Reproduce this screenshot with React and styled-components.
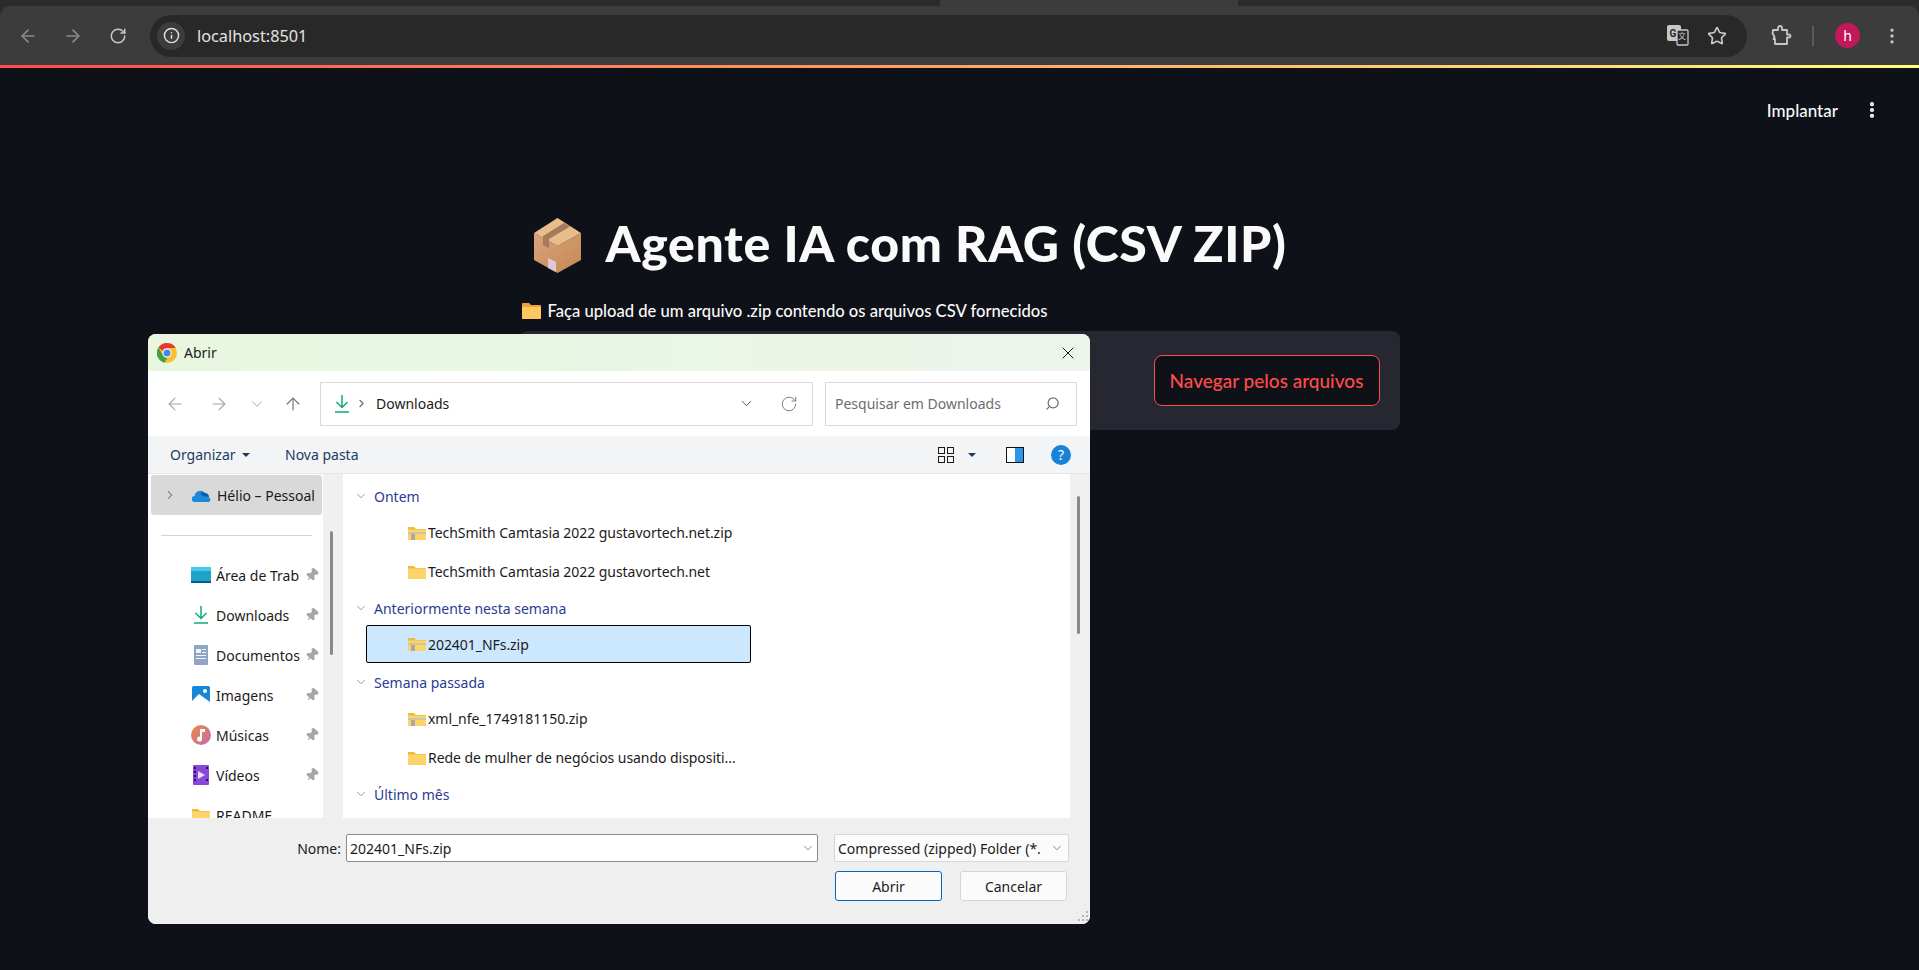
import React from 'react'
import styled, { createGlobalStyle } from 'styled-components'
import {
  ArrowLeft, ArrowRight, ArrowUp, RotateCw, Info, Star, EllipsisVertical,
  ChevronDown, ChevronRight, Search, X, Pin
} from 'lucide-react'

const GlobalStyle = createGlobalStyle`
  html, body {
    margin: 0;
    height: 970px;
    overflow: hidden;
    background: #0e1117;
    font-family: "Noto Sans", sans-serif;
  }
`

const BrowserFrame = styled.div`
  background: #2b2b2b;
`

const TabStrip = styled.div`
  height: 6px;
  padding-left: 940px;
`

const ActiveTab = styled.div`
  width: 298px;
  height: 6px;
  background: #3c3c3c;
`

const Toolbar = styled.div`
  height: 59px;
  display: flex;
  align-items: center;
  padding-left: 5px;
  background: #3c3c3c;
  border-radius: 10px 10px 0 0;
`

const NavButton = styled.div`
  width: 45px;
  display: flex;
  justify-content: center;
  color: ${p => (p.$dim ? '#8a8a8a' : '#c7c7c7')};
`

const Omnibox = styled.div`
  flex: 1;
  height: 42px;
  margin-left: 10px;
  padding: 0 20px 0 7px;
  display: flex;
  align-items: center;
  background: #282828;
  border-radius: 21px;
  color: #e3e3e3;
`

const InfoChip = styled.div`
  width: 28px;
  height: 28px;
  display: flex;
  align-items: center;
  justify-content: center;
  border-radius: 50%;
  background: #3c3c3c;
`

const Url = styled.span`
  flex: 1;
  margin-left: 12px;
  font-size: 16.3px;
`

const OmniIcons = styled.div`
  display: flex;
  align-items: center;
  gap: 18px;
  color: #c7c7c7;
`

const ToolbarRight = styled.div`
  width: 172px;
  display: flex;
  align-items: center;
  padding-left: 24px;
  box-sizing: border-box;
  color: #c7c7c7;
`

const Divider = styled.div`
  width: 2px;
  height: 20px;
  margin: 0 21px 0 20px;
  background: #5a5a5a;
`

const Avatar = styled.div`
  width: 25px;
  height: 25px;
  display: flex;
  align-items: center;
  justify-content: center;
  border-radius: 50%;
  background: #c2185b;
  color: #fff;
  font-size: 14px;
`

const KebabSlot = styled.div`
  margin-left: 22px;
  display: flex;
  color: #c7c7c7;
`

const Decoration = styled.div`
  height: 3px;
  background: linear-gradient(90deg, #ff4b4b, #fffd80);
`

const PageHeader = styled.header`
  height: 84px;
  padding-right: 37px;
  display: flex;
  align-items: center;
  justify-content: flex-end;
  gap: 24px;
  color: #fafafa;
  font-family: Lato, sans-serif;
  font-size: 17px;
  font-weight: 500;
`

const Column = styled.main`
  width: 880px;
  margin: 0 auto;
  font-family: Lato, sans-serif;
  color: #fafafa;
`

const Title = styled.h1`
  height: 80px;
  margin: 51px 0 0 14px;
  display: flex;
  align-items: center;
  gap: 25px;
  font-size: 50px;
  line-height: 80px;
  font-weight: 900;
  letter-spacing: 0.65px;
  svg { margin-top: 4px; }
`

const Caption = styled.p`
  height: 24px;
  margin: 16px 0 0;
  padding-left: 2px;
  display: flex;
  align-items: center;
  gap: 7px;
  font-size: 16.6px;
  font-weight: 500;
`

const Dropzone = styled.section`
  height: 99px;
  margin-top: 8px;
  padding-right: 20px;
  display: flex;
  align-items: center;
  justify-content: flex-end;
  background: #262730;
  border-radius: 8px;
`

const BrowseButton = styled.button`
  width: 226px;
  height: 51px;
  padding: 0;
  background: #0e1117;
  border: 1px solid #ff4b4b;
  border-radius: 8px;
  color: #ff4b4b;
  font-family: Lato, sans-serif;
  font-size: 19px;
  font-weight: 500;
`

const Dialog = styled.div`
  position: absolute;
  left: 148px;
  top: 334px;
  width: 942px;
  height: 590px;
  display: flex;
  flex-direction: column;
  overflow: hidden;
  background: #fff;
  border-radius: 8px;
  color: #1b1b1b;
  font-size: 14px;
`

const TitleBar = styled.div`
  height: 37px;
  flex: none;
  padding: 0 12px 0 9px;
  display: flex;
  align-items: center;
  gap: 7px;
  background: linear-gradient(90deg, #e9f7df, #ebf5eb);
`

const TitleText = styled.span`
  flex: 1;
`

const PathRow = styled.div`
  height: 65px;
  flex: none;
  padding-left: 5px;
  display: flex;
  align-items: center;
  background: #fff;
`

const PathButton = styled.div`
  width: ${p => p.$w}px;
  display: flex;
  justify-content: center;
  color: ${p => (p.$dark ? '#6a6a6a' : '#a3a3a3')};
`

const PathBox = styled.div`
  width: 493px;
  height: 44px;
  margin-left: 7px;
  padding: 0 14px 0 13px;
  box-sizing: border-box;
  display: flex;
  align-items: center;
  border: 1px solid #d9d9d9;
`

const Crumb = styled.span`
  flex: 1;
  margin-left: 8px;
`

const SearchBox = styled.div`
  width: 252px;
  height: 44px;
  margin-left: 12px;
  padding: 0 16px 0 9px;
  box-sizing: border-box;
  display: flex;
  align-items: center;
  justify-content: space-between;
  border: 1px solid #d9d9d9;
  color: #6d6d6d;
`

const CommandBar = styled.div`
  height: 38px;
  flex: none;
  padding: 0 19px 0 22px;
  display: flex;
  align-items: center;
  background: #f3f4f6;
  border-bottom: 1px solid #e6e6e6;
  box-sizing: border-box;
  color: #1c3b63;
`

const Command = styled.span`
  display: flex;
  align-items: center;
  gap: 6px;
  width: ${p => p.$w}px;
`

const Caret = styled.span`
  width: 0;
  height: 0;
  margin: ${p => p.$margin || '0'};
  border-left: 4px solid transparent;
  border-right: 4px solid transparent;
  border-top: 4px solid #1c3b63;
`

const CommandIcons = styled.div`
  margin-left: auto;
  display: flex;
  align-items: center;
  svg:last-child { margin-left: 27px; }
`

const Panes = styled.div`
  height: 344px;
  flex: none;
  display: flex;
  background: #fff;
`

const NavPane = styled.nav`
  width: 175px;
  flex: none;
  padding: 1px 1px 0 3px;
  box-sizing: border-box;
  overflow: hidden;
`

const NavItem = styled.div`
  height: 40px;
  flex: none;
  display: flex;
  align-items: center;
  white-space: nowrap;
  padding-left: ${p => (p.$root ? 12 : 40)}px;
  background: ${p => (p.$selected ? '#d9d9d9' : 'transparent')};
  border-radius: ${p => (p.$selected ? '3px' : '0')};
  color: #1b1b1b;
`

const NavIcon = styled.span`
  width: 20px;
  height: 20px;
  flex: none;
  margin-right: 5px;
  display: flex;
  align-items: center;
  justify-content: center;
`

const NavLabel = styled.span`
  width: 89px;
  flex: none;
  overflow: hidden;
`

const PinSlot = styled.span`
  display: flex;
  color: #a5a5a5;
  svg { transform: rotate(40deg); }
`

const NavRule = styled.div`
  height: 1px;
  margin: 20px 10px 19px 10px;
  background: #d4d4d4;
`

const ScrollStrip = styled.div`
  width: ${p => p.$w}px;
  flex: none;
  padding-top: ${p => p.$top}px;
  padding-left: 7px;
  box-sizing: border-box;
  background: #f0f0f0;
`

const ScrollThumb = styled.div`
  width: 3px;
  height: ${p => p.$h}px;
  background: #8a8a8a;
  border-radius: 2px;
`

const FileList = styled.div`
  flex: 1;
  padding: 5px 16px 0 11px;
  overflow: hidden;
`

const GroupHeader = styled.div`
  height: 34px;
  display: flex;
  align-items: center;
  gap: 6px;
  color: #2b3b95;
  svg { color: #7d7d7d; }
`

const FileRow = styled.div`
  width: 385px;
  height: ${p => (p.$selected ? 38 : 39)}px;
  margin: ${p => (p.$selected ? '0 0 2px 12px' : '0 0 0 12px')};
  padding-left: 41px;
  box-sizing: border-box;
  display: flex;
  align-items: center;
  gap: 2px;
  background: ${p => (p.$selected ? '#cce8ff' : 'transparent')};
  border: 1px solid ${p => (p.$selected ? '#000' : 'transparent')};
  border-radius: 2px;
  white-space: nowrap;
  letter-spacing: -0.05px;
`

const Footer = styled.div`
  position: relative;
  flex: 1;
  padding: 16px 21px 0 0;
  background: #efefef;
`

const FormRow = styled.div`
  display: flex;
  justify-content: flex-end;
  align-items: center;
`

const NameLabel = styled.label`
  margin-right: 5px;
`

const NameField = styled.div`
  width: 472px;
  height: 28px;
  padding: 0 2px 0 3px;
  box-sizing: border-box;
  display: flex;
  align-items: center;
  justify-content: space-between;
  background: #fff;
  border: 1px solid #8a8a8a;
  border-radius: 2px;
`

const TypeField = styled.div`
  width: 235px;
  height: 28px;
  margin-left: 16px;
  padding: 0 4px 0 3px;
  box-sizing: border-box;
  display: flex;
  align-items: center;
  justify-content: space-between;
  background: #fbfbfb;
  border: 1px solid #d5d5d5;
  border-radius: 2px;
`

const TypeText = styled.span`
  width: 202px;
  overflow: hidden;
  white-space: nowrap;
`

const Actions = styled(FormRow)`
  margin-top: 9px;
  padding-right: 2px;
  gap: 18px;
`

const DialogButton = styled.button`
  width: 107px;
  height: 30px;
  padding: 0;
  background: #fbfbfb;
  border: 1px solid ${p => (p.$primary ? '#0067c0' : '#d5d5d5')};
  border-radius: 3px;
  color: #1b1b1b;
  font-family: "Noto Sans", sans-serif;
  font-size: 14px;
`

const Grip = styled.svg`
  position: absolute;
  right: 1px;
  bottom: 1px;
`

const Box3D = () => (
  <svg width="47" height="55" viewBox="0 0 47 55">
    <defs>
      <linearGradient id="boxFront" x1="0" y1="0" x2="1" y2="1">
        <stop offset="0" stopColor="#d9a57c" />
        <stop offset="1" stopColor="#c48752" />
      </linearGradient>
    </defs>
    <path d="M23.500 28 47 15v27L23.500 55 0 42V15z" fill="url(#boxFront)" />
    <path d="M23.500 0 47 15 23.500 28 0 15z" fill="#e8bd89" />
    <path d="M30 5l6 3.500L15 21v9l-6-3v-9z" fill="#a87a5c" />
    <path d="M14 40l8 4v10l-8-4z" fill="#ddc9d4" />
  </svg>
)

const EmojiFolder = () => (
  <svg width="19" height="16" viewBox="0 0 19 16">
    <path d="M1 0h6l2 2h9a1 1 0 0 1 1 1v12a1 1 0 0 1-1 1H1a1 1 0 0 1-1-1V1a1 1 0 0 1 1-1z" fill="#e8a33a" />
    <rect y="4" width="19" height="12" rx="1" fill="#fcc85f" />
  </svg>
)

const Folder = ({ zip }) => (
  <svg width="18" height="14" viewBox="0 0 18 14">
    <path d="M0 1h6l2 2h10v11H0z" fill="#f0b93c" />
    <rect y="3.500" width="18" height="10.500" fill="#fdd468" />
    {zip && <rect y="6" width="18" height="2" fill="#c9c6ae" />}
    {zip && <rect x="3" y="8" width="4" height="6" fill="#a9a9a0" />}
  </svg>
)

const ChromeLogo = () => (
  <svg width="20" height="20" viewBox="0 0 20 20">
    <circle cx="10" cy="10" r="10" fill="#fbc02d" />
    <path d="M10 0a10 10 0 0 1 8.700 5H10a5 5 0 0 0-4.500 2.800L1.500 4.500A10 10 0 0 1 10 0z" fill="#e53935" />
    <path d="M1.500 4.500 5.800 12a5 5 0 0 0 4.600 3L7.400 19.700A10 10 0 0 1 1.500 4.500z" fill="#43a047" />
    <circle cx="10" cy="10" r="4.500" fill="#fff" />
    <circle cx="10" cy="10" r="3.500" fill="#4285f4" />
  </svg>
)

const DownloadIcon = () => (
  <svg width="16" height="18" viewBox="0 0 16 18" fill="none" stroke="#12a97f" strokeWidth="1.500">
    <path d="M8 0v12M2.500 7 8 12.500 13.500 7M1 17h14" />
  </svg>
)

const TranslateIcon = () => (
  <svg width="22" height="21" viewBox="0 0 22 21">
    <rect x="0" y="0" width="14" height="16" rx="2" fill="#c7c7c7" />
    <text x="2.500" y="11.500" fontSize="10" fontWeight="700" fill="#282828" fontFamily="Roboto">G</text>
    <rect x="10" y="5" width="11" height="15" rx="1" fill="#282828" stroke="#c7c7c7" strokeWidth="1.300" />
    <text x="11" y="14" fontSize="8" fill="#c7c7c7" fontFamily="Noto Sans CJK SC">文</text>
  </svg>
)

const PuzzleIcon = () => (
  <svg width="21" height="21" viewBox="0 0 21 21" fill="none" stroke="#c7c7c7" strokeWidth="1.800">
    <path d="M2 5h5V3a2 2 0 0 1 4 0v2h5v4.500h2a1.500 1.500 0 0 1 0 3h-2V19H4v-5H2.500l1-2-2-4z" strokeLinejoin="round" />
  </svg>
)

const ViewIcon = () => (
  <svg width="16" height="16" viewBox="0 0 16 16" fill="none" stroke="#1b1b1b">
    <rect x=".5" y=".5" width="6" height="6" />
    <rect x="9.500" y=".5" width="6" height="6" />
    <rect x=".5" y="9.500" width="6" height="6" />
    <rect x="9.500" y="9.500" width="6" height="6" />
  </svg>
)

const PreviewIcon = () => (
  <svg width="18" height="16" viewBox="0 0 18 16">
    <rect x=".5" y=".5" width="17" height="15" fill="#fff" stroke="#111" />
    <rect x="9" y="1" width="8" height="14" fill="#2f95e6" />
  </svg>
)

const HelpIcon = () => (
  <svg width="20" height="20" viewBox="0 0 20 20">
    <circle cx="10" cy="10" r="10" fill="#1683d8" />
    <text x="10" y="15" textAnchor="middle" fontSize="14" fill="#fff" fontFamily="Noto Sans">?</text>
  </svg>
)

const OneDrive = () => (
  <svg width="20" height="13" viewBox="0 0 20 13">
    <path d="M3 13a3 3 0 0 1-.500-6A6 6 0 0 1 13 4a4.500 4.500 0 0 1 4 4.500A2.500 2.500 0 0 1 17 13z" fill="#1e88d9" />
    <path d="M8 4a6 6 0 0 1 5 0 4.500 4.500 0 0 1 4 4l-6-1z" fill="#0a5fb0" />
  </svg>
)

const DesktopIcon = () => (
  <svg width="20" height="16" viewBox="0 0 20 16">
    <rect width="20" height="16" rx="1" fill="#1ea3c9" />
    <rect y="0" width="20" height="4" fill="#45cbe3" />
    <rect y="14" width="20" height="2" fill="#0b5c8a" />
  </svg>
)

const DocIcon = () => (
  <svg width="14" height="20" viewBox="0 0 14 20">
    <rect width="14" height="20" rx="1" fill="#8ea6c4" />
    <path d="M2 4h5v4H2zM8 4h4v1H8zM8 7h4v1H8zM2 10h10v1H2zM2 13h10v1H2z" fill="#f1f5fa" />
  </svg>
)

const ImageIcon = () => (
  <svg width="18" height="18" viewBox="0 0 18 18">
    <rect width="18" height="18" rx="1.500" fill="#1a86d9" />
    <circle cx="13" cy="5" r="2" fill="#fff" />
    <path d="M0 15 7 8l11 8v2H0z" fill="#fff" />
  </svg>
)

const MusicIcon = () => (
  <svg width="20" height="20" viewBox="0 0 20 20">
    <defs>
      <linearGradient id="mus" x1="0" y1="0" x2="1" y2="1">
        <stop offset="0" stopColor="#ee8a3c" />
        <stop offset="1" stopColor="#c46bb0" />
      </linearGradient>
    </defs>
    <circle cx="10" cy="10" r="10" fill="url(#mus)" />
    <path d="M9 4h5v3h-3v7a2.500 2.500 0 1 1-2-2.400z" fill="#fff" />
  </svg>
)

const VideoIcon = () => (
  <svg width="16" height="20" viewBox="0 0 16 20">
    <rect width="16" height="20" rx="1" fill="#8a46d8" />
    <path d="M5 6l7 4-7 4z" fill="#e9dcfb" />
    <path d="M1 2h2v2H1zM1 6h2v2H1zM1 10h2v2H1zM1 14h2v2H1zM13 2h2v2h-2zM13 14h2v2h-2z" fill="#2c1454" />
  </svg>
)

const NAV_ITEMS = [
  { label: 'Área de Trab', icon: <DesktopIcon /> },
  { label: 'Downloads', icon: <DownloadIcon /> },
  { label: 'Documentos', icon: <DocIcon /> },
  { label: 'Imagens', icon: <ImageIcon /> },
  { label: 'Músicas', icon: <MusicIcon /> },
  { label: 'Vídeos', icon: <VideoIcon /> }
]

const FILE_GROUPS = [
  {
    title: 'Ontem',
    files: [
      { name: 'TechSmith Camtasia 2022 gustavortech.net.zip', zip: true },
      { name: 'TechSmith Camtasia 2022 gustavortech.net' }
    ]
  },
  {
    title: 'Anteriormente nesta semana',
    files: [{ name: '202401_NFs.zip', zip: true, selected: true }]
  },
  {
    title: 'Semana passada',
    files: [
      { name: 'xml_nfe_1749181150.zip', zip: true },
      { name: 'Rede de mulher de negócios usando dispositi...' }
    ]
  },
  { title: 'Último mês', files: [] }
]

const App = () => (
  <>
    <GlobalStyle />
    <BrowserFrame>
      <TabStrip><ActiveTab /></TabStrip>
      <Toolbar>
        <NavButton $dim><ArrowLeft size={20} /></NavButton>
        <NavButton $dim><ArrowRight size={20} /></NavButton>
        <NavButton><RotateCw size={18} /></NavButton>
        <Omnibox>
          <InfoChip><Info size={17} /></InfoChip>
          <Url>localhost:8501</Url>
          <OmniIcons>
            <TranslateIcon />
            <Star size={20} />
          </OmniIcons>
        </Omnibox>
        <ToolbarRight>
          <PuzzleIcon />
          <Divider />
          <Avatar>h</Avatar>
          <KebabSlot><EllipsisVertical size={20} /></KebabSlot>
        </ToolbarRight>
      </Toolbar>
    </BrowserFrame>
    <Decoration />
    <PageHeader>
      Implantar
      <EllipsisVertical size={20} strokeWidth={3} />
    </PageHeader>
    <Column>
      <Title><Box3D /> Agente IA com RAG (CSV ZIP)</Title>
      <Caption><EmojiFolder /> Faça upload de um arquivo .zip contendo os arquivos CSV fornecidos</Caption>
      <Dropzone>
        <BrowseButton>Navegar pelos arquivos</BrowseButton>
      </Dropzone>
    </Column>
    <Dialog>
      <TitleBar>
        <ChromeLogo />
        <TitleText>Abrir</TitleText>
        <X size={20} strokeWidth={1.2} />
      </TitleBar>
      <PathRow>
        <PathButton $w={44}><ArrowLeft size={20} strokeWidth={1.3} /></PathButton>
        <PathButton $w={44}><ArrowRight size={20} strokeWidth={1.3} /></PathButton>
        <PathButton $w={32}><ChevronDown size={18} strokeWidth={1.3} /></PathButton>
        <PathButton $w={40} $dark><ArrowUp size={20} strokeWidth={1.3} /></PathButton>
        <PathBox>
          <DownloadIcon />
          <ChevronRight size={13} color="#6a6a6a" style={{ marginLeft: 5 }} />
          <Crumb>Downloads</Crumb>
          <ChevronDown size={17} strokeWidth={1.4} color="#555" style={{ marginRight: 25 }} />
          <RotateCw size={18} strokeWidth={1.1} color="#666" />
        </PathBox>
        <SearchBox>
          Pesquisar em Downloads
          <Search size={15} style={{ transform: 'scaleX(-1)' }} />
        </SearchBox>
      </PathRow>
      <CommandBar>
        <Command $w={115}>Organizar <Caret /></Command>
        <Command>Nova pasta</Command>
        <CommandIcons>
          <ViewIcon />
          <Caret $margin="0 30px 0 14px" />
          <PreviewIcon />
          <HelpIcon />
        </CommandIcons>
      </CommandBar>
      <Panes>
        <NavPane>
          <NavItem $root $selected>
            <ChevronRight size={14} color="#8a8a8a" style={{ marginRight: 15 }} />
            <NavIcon><OneDrive /></NavIcon>
            Hélio – Pessoal
          </NavItem>
          <NavRule />
          {NAV_ITEMS.map(item => (
            <NavItem key={item.label}>
              <NavIcon>{item.icon}</NavIcon>
              <NavLabel>{item.label}</NavLabel>
              <PinSlot><Pin size={14} fill="currentColor" /></PinSlot>
            </NavItem>
          ))}
          <NavItem>
            <NavIcon><Folder /></NavIcon>
            README
          </NavItem>
        </NavPane>
        <ScrollStrip $w={20} $top={57}><ScrollThumb $h={124} /></ScrollStrip>
        <FileList>
          {FILE_GROUPS.map(group => (
            <div key={group.title}>
              <GroupHeader>
                <ChevronDown size={14} strokeWidth={1.3} />
                {group.title}
              </GroupHeader>
              {group.files.map(file => (
                <FileRow key={file.name} $selected={file.selected}>
                  <Folder zip={file.zip} />
                  {file.name}
                </FileRow>
              ))}
            </div>
          ))}
        </FileList>
        <ScrollStrip $w={20} $top={22}><ScrollThumb $h={138} /></ScrollStrip>
      </Panes>
      <Footer>
        <FormRow>
          <NameLabel>Nome:</NameLabel>
          <NameField>
            202401_NFs.zip
            <ChevronDown size={14} strokeWidth={1.2} color="#555" />
          </NameField>
          <TypeField>
            <TypeText>Compressed (zipped) Folder (*.zip)</TypeText>
            <ChevronDown size={14} strokeWidth={1.2} color="#555" />
          </TypeField>
        </FormRow>
        <Actions>
          <DialogButton $primary>Abrir</DialogButton>
          <DialogButton>Cancelar</DialogButton>
        </Actions>
        <Grip width="12" height="12" viewBox="0 0 12 12" fill="#b5b5b5">
          <path d="M9 0h2v2H9zM5 4h2v2H5zM9 4h2v2H9zM1 8h2v2H1zM5 8h2v2H5zM9 8h2v2H9z" />
        </Grip>
      </Footer>
    </Dialog>
  </>
)

export default App
